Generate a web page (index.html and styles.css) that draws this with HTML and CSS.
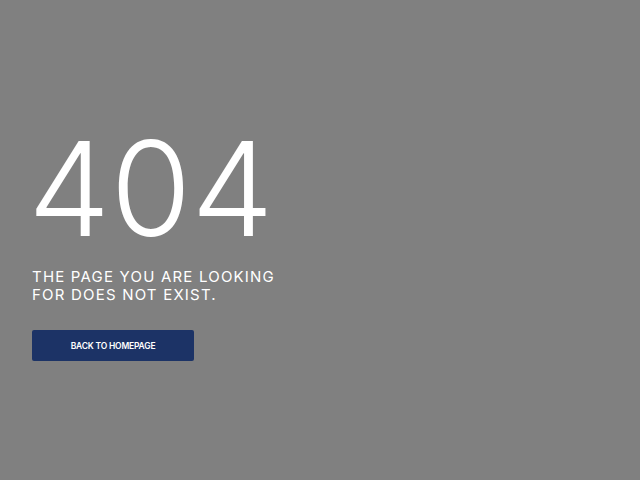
FILE: index.html
```html
<!DOCTYPE html>
<html lang="en">
<head>
  <meta charset="UTF-8">
  <meta name="viewport" content="width=device-width, initial-scale=1.0">
  <title>Page not found</title>
  <link rel="stylesheet" href="styles.css">
</head>
<body>

  <main class="notfound">
    <h1 class="code">404</h1>
    <p class="message">The page you are looking<br>for does not exist.</p>
    <a class="home-btn" href="#">Back to homepage</a>
  </main>

</body>
</html>
```

FILE: styles.css
```css
body {
  font-family: Inter, 'Liberation Sans', sans-serif;
  background-color: #808080;
  margin: 0;
  padding: 0;
  color: #fff;
}

.notfound {
  padding: 110px 32px 0;
  display: flex;
  flex-direction: column;
  align-items: flex-start;
}

.code {
  font-size: 131px;
  font-weight: 300;
  line-height: 158px;
  letter-spacing: 0;
  margin: 0 0 0 -4px;
}

.message {
  margin: 0;
  font-size: 15px;
  line-height: 18px;
  letter-spacing: 1.2px;
  text-transform: uppercase;
}

.home-btn {
  margin-top: 26px;
  width: 162px;
  height: 31px;
  display: flex;
  align-items: center;
  justify-content: center;
  background-color: #1c3366;
  border-radius: 2px;
  color: #fff;
  font-size: 8.5px;
  font-weight: 600;
  text-transform: uppercase;
  text-decoration: none;
  letter-spacing: -0.2px;
}
```
